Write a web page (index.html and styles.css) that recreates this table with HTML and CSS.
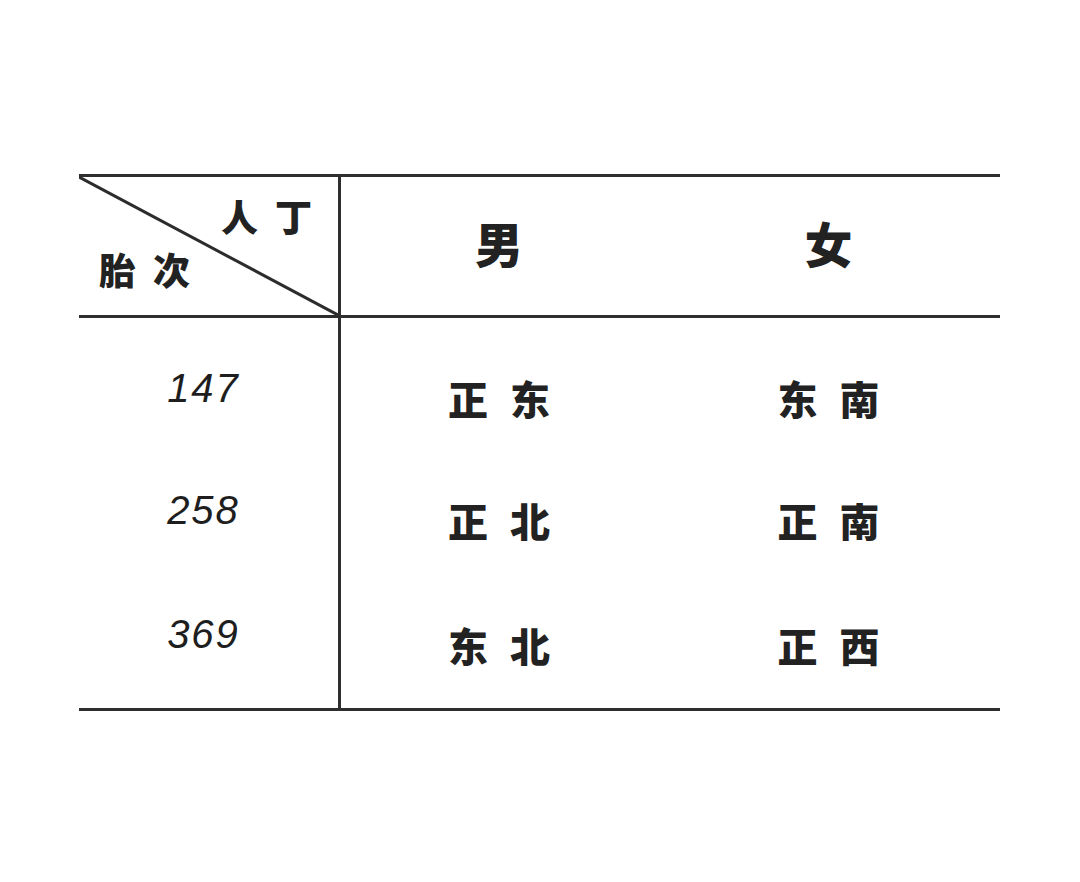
FILE: index.html
```html
<!DOCTYPE html>
<html lang="zh">
<head>
<meta charset="utf-8">
<link rel="stylesheet" href="styles.css">
</head>
<body>
<div class="table">
  <div class="row head">
    <div class="cell corner">
      <svg class="diag" viewBox="0 0 259 138" preserveAspectRatio="none"><line x1="0" y1="0" x2="259" y2="138" stroke="#2c2c2c" stroke-width="3"/></svg>
      <span class="c-top">人丁</span>
      <span class="c-bot">胎次</span>
    </div>
    <div class="cell hd">男</div>
    <div class="cell hd">女</div>
  </div>
  <div class="body">
    <div class="row">
      <div class="cell num">147</div>
      <div class="cell dir">正东</div>
      <div class="cell dir">东南</div>
    </div>
    <div class="row">
      <div class="cell num">258</div>
      <div class="cell dir">正北</div>
      <div class="cell dir">正南</div>
    </div>
    <div class="row">
      <div class="cell num">369</div>
      <div class="cell dir">东北</div>
      <div class="cell dir">正西</div>
    </div>
  </div>
</div>
</body>
</html>
```
FILE: styles.css
```css
html, body {
  margin: 0;
  background: #ffffff;
}
body {
  width: 1080px;
  height: 882px;
  overflow: hidden;
  font-family: "Noto Sans CJK SC", "Noto Sans", sans-serif;
  color: #222222;
}
.table {
  margin: 174px 0 0 79px;
  width: 921px;
  border-top: 3px solid #2e2e2e;
  border-bottom: 3px solid #2e2e2e;
}
.row {
  display: grid;
  grid-template-columns: 262px 316px 1fr;
}
.head {
  height: 138px;
  border-bottom: 3px solid #2e2e2e;
}
.cell {
  display: flex;
  align-items: center;
  justify-content: center;
}
.row .cell:first-child {
  border-right: 3px solid #2e2e2e;
}
.corner {
  position: relative;
  display: block;
}
.diag {
  position: absolute;
  left: 0;
  top: 0;
  width: 100%;
  height: 100%;
}
.c-top, .c-bot {
  position: absolute;
  font-size: 37px;
  font-weight: 900;
  letter-spacing: 17px;
  line-height: 1;
}
.c-top {
  left: 142px;
  top: 21px;
}
.c-bot {
  left: 20px;
  top: 74px;
}
.hd {
  font-size: 48px;
  font-weight: 900;
  padding-bottom: 8px;
}
.body .row {
  height: 122px;
}
.body .row:first-child {
  height: 141px;
}
.body .row:first-child .cell {
  padding-top: 19px;
}
.body .row .cell:first-child {
  padding-bottom: 20px;
}
.body .row:last-child {
  height: 127px;
}
.num {
  font-family: "Liberation Sans", sans-serif;
  font-size: 40px;
  font-style: italic;
  letter-spacing: 2px;
  color: #1e1e1e;
  padding-right: 10px;
}
.body .row:first-child .num {
  padding-bottom: 20px;
}
.dir {
  font-size: 40px;
  font-weight: 900;
  letter-spacing: 22px;
  padding-left: 22px;
}
```
